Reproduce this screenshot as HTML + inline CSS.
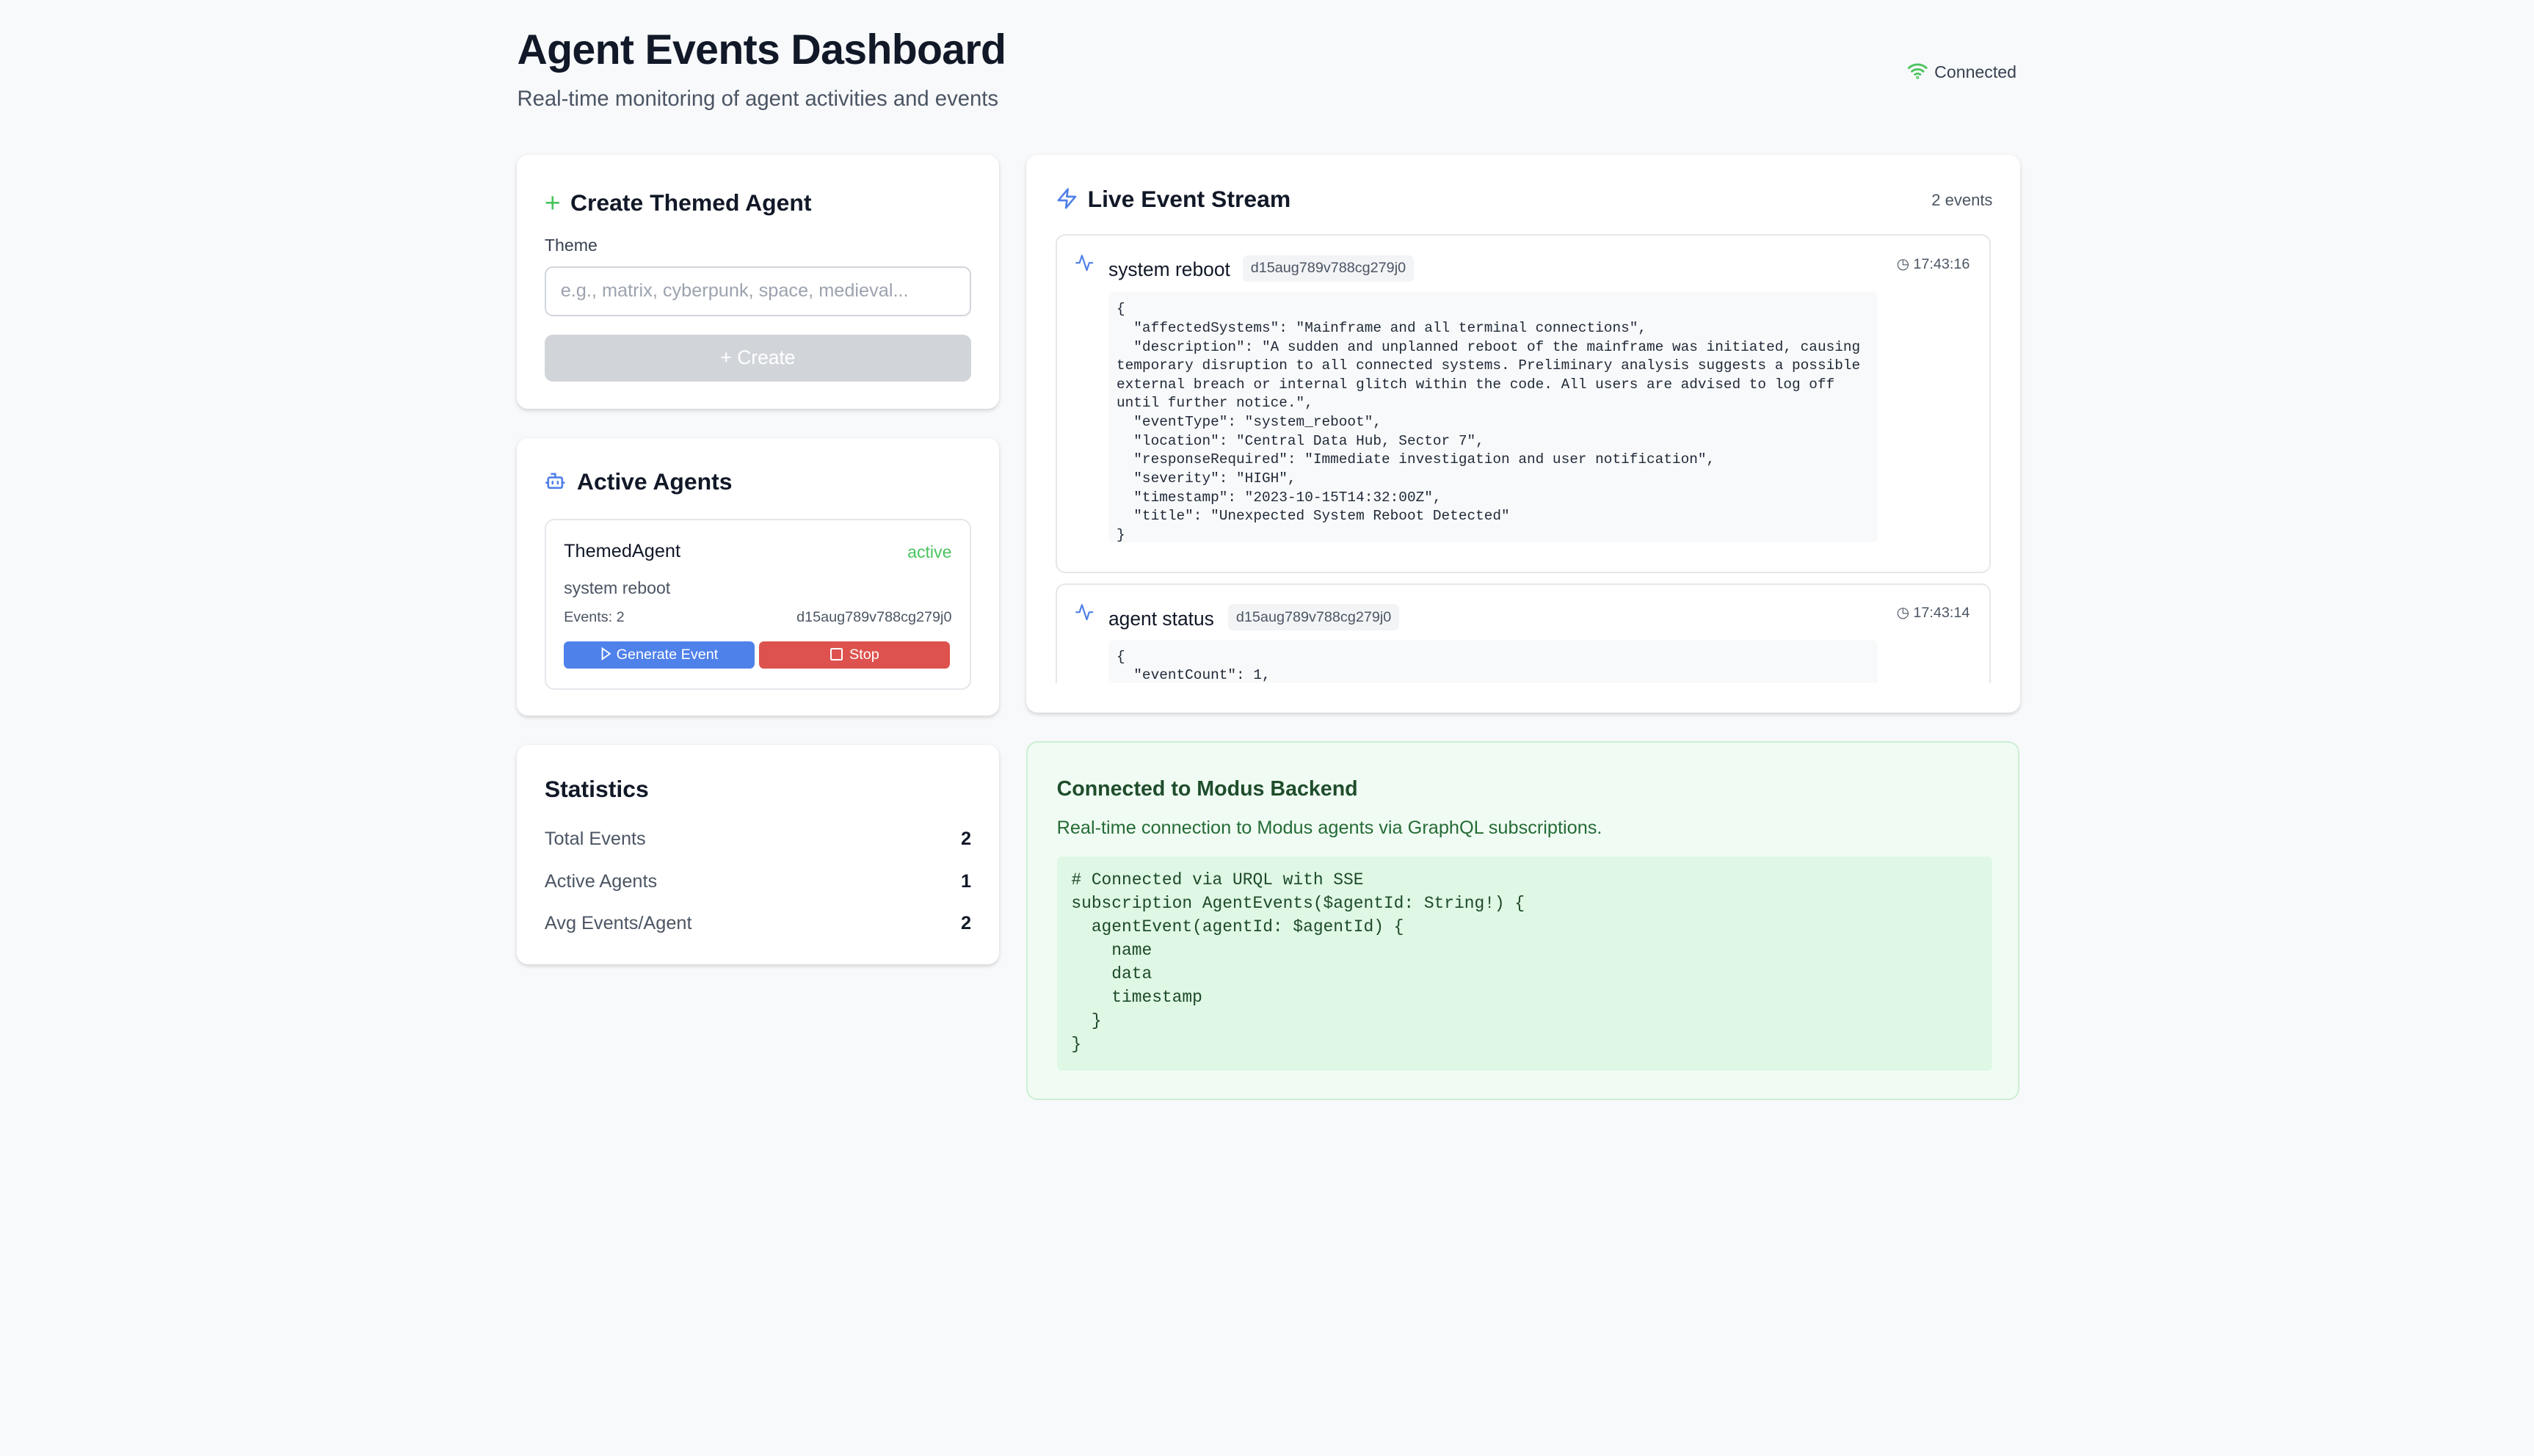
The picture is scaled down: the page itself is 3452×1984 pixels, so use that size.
<!DOCTYPE html>
<html><head><meta charset="utf-8"><style>
html,body{margin:0;padding:0;background:#f8f9fb;}
body{width:3452px;height:1984px;overflow:hidden;}
#r{zoom:2.2015;position:relative;width:1568px;height:901px;font-family:"Liberation Sans",sans-serif;color:#111827;}
.a{position:absolute;}
.card{position:absolute;background:#fff;border-radius:7px;box-shadow:0 1px 3px rgba(0,0,0,.10),0 1px 2px rgba(0,0,0,.06);}
.h{font-size:14.5px;font-weight:bold;color:#111827;white-space:nowrap;}
.mono{font-family:"Liberation Mono","DejaVu Sans Mono",monospace;white-space:pre;}
.tag{background:#f3f4f6;border-radius:3px;color:#4b5563;font-size:9px;padding:3px 5px;}
</style></head><body><div id="r">
<div class="a" style="left:320px;top:16px;font-size:26px;font-weight:bold;letter-spacing:-0.3px;">Agent Events Dashboard</div>
<div class="a" style="left:320px;top:54px;font-size:13.3px;color:#4b5563;">Real-time monitoring of agent activities and events</div>
<div class="a" style="left:1180px;top:38px;font-size:10.5px;color:#374151;">
<svg width="13" height="11" viewBox="0 0 24 20" style="vertical-align:-1px;margin-right:4px" fill="none" stroke="#4ac45e" stroke-width="2.4" stroke-linecap="round"><path d="M2 7a15 15 0 0 1 20 0M5.5 11a10 10 0 0 1 13 0M9 14.5a5 5 0 0 1 6 0"/><circle cx="12" cy="18" r="0.6"/></svg>Connected</div>

<!-- Create -->
<div class="card" style="left:320px;top:96px;width:298px;height:157px;">
 <div class="a h" style="left:17px;top:19px;"><span style="color:#4ac45e;font-weight:normal;font-size:17px;margin-right:6px;position:relative;top:1px">+</span>Create Themed Agent</div>
 <div class="a" style="left:17px;top:50px;font-size:10.5px;color:#374151;">Theme</div>
 <div class="a" style="left:17px;top:69px;width:262px;height:29px;border:1px solid #d1d5db;border-radius:5px;font-size:11.5px;color:#9ca3af;line-height:29px;text-indent:9px;">e.g., matrix, cyberpunk, space, medieval...</div>
 <div class="a" style="left:17px;top:111px;width:264px;height:29px;background:#d1d5da;border-radius:5px;color:#fff;font-size:12px;text-align:center;line-height:29px;">+ Create</div>
</div>

<!-- Active Agents -->
<div class="card" style="left:320px;top:271px;width:298px;height:172px;">
 <div class="a h" style="left:17px;top:19px;"><svg width="13" height="13" viewBox="0 0 24 24" fill="none" stroke="#4f7fe8" stroke-width="2.2" stroke-linecap="round" style="vertical-align:-1px;margin-right:7px"><path d="M12 8V4H8"/><rect x="4" y="8" width="16" height="12" rx="2"/><path d="M2 14h2M20 14h2M9 13v2M15 13v2"/></svg>Active Agents</div>
 <div class="a" style="left:17px;top:50px;width:262px;height:104px;border:1px solid #e5e7eb;border-radius:6px;">
  <div class="a" style="left:11px;top:13px;font-size:11.5px;">ThemedAgent</div>
  <div class="a" style="right:11px;top:14px;font-size:10.5px;color:#4ac45e;">active</div>
  <div class="a" style="left:11px;top:36px;font-size:10.5px;color:#4b5563;">system reboot</div>
  <div class="a" style="left:11px;top:55px;font-size:9px;color:#4b5563;">Events: 2</div>
  <div class="a" style="right:11px;top:55px;font-size:9px;color:#4b5563;">d15aug789v788cg279j0</div>
  <div class="a" style="left:11px;top:75px;width:118px;height:17px;background:#4f81ea;border-radius:3px;color:#fff;font-size:9px;text-align:center;line-height:17px;"><svg width="7" height="8" viewBox="0 0 10 12" style="vertical-align:-1px;margin-right:3px" fill="none" stroke="#fff" stroke-width="1.3"><path d="M1.5 1l7 5-7 5z"/></svg>Generate Event</div>
  <div class="a" style="left:132px;top:75px;width:118px;height:17px;background:#dd524e;border-radius:3px;color:#fff;font-size:9px;text-align:center;line-height:17px;"><span style="display:inline-block;width:6px;height:6px;border:1px solid #fff;border-radius:1px;vertical-align:-1px;margin-right:4px"></span>Stop</div>
 </div>
</div>

<!-- Statistics -->
<div class="card" style="left:320px;top:461px;width:298px;height:136px;">
 <div class="a h" style="left:17px;top:19px;">Statistics</div>
 <div class="a" style="left:17px;top:52px;font-size:11.5px;color:#4b5563;">Total Events</div>
 <div class="a" style="right:17px;top:52px;font-size:11.5px;font-weight:bold;">2</div>
 <div class="a" style="left:17px;top:78px;font-size:11.5px;color:#4b5563;">Active Agents</div>
 <div class="a" style="right:17px;top:78px;font-size:11.5px;font-weight:bold;">1</div>
 <div class="a" style="left:17px;top:104px;font-size:11.5px;color:#4b5563;">Avg Events/Agent</div>
 <div class="a" style="right:17px;top:104px;font-size:11.5px;font-weight:bold;">2</div>
</div>

<!-- Live event stream -->
<div class="card" style="left:635px;top:96px;width:615px;height:345px;">
 <div class="a h" style="left:18px;top:19px;"><svg width="14" height="15" viewBox="0 0 24 24" fill="none" stroke="#4f7fe8" stroke-width="2" stroke-linejoin="round" style="vertical-align:-2px;margin-right:6px"><path d="M13 2L3 14h9l-1 8 10-12h-9l1-8z"/></svg>Live Event Stream</div>
 <div class="a" style="right:17px;top:22px;font-size:10px;color:#4b5563;">2 events</div>
 <div class="a" style="left:18px;top:49px;width:579px;height:278px;overflow:hidden;">
  <div class="a" style="left:0;top:0;width:577px;height:208px;border:1px solid #e5e7eb;border-radius:6px;">
   <svg class="a" style="left:11px;top:11px" width="12" height="12" viewBox="0 0 24 24" fill="none" stroke="#4f7fe8" stroke-width="2" stroke-linejoin="round" stroke-linecap="round"><path d="M22 12h-4l-3 9L9 3l-3 9H2"/></svg>
   <div class="a" style="left:32px;top:14px;font-size:12px;">system reboot</div>
   <div class="a tag" style="left:115px;top:12px;">d15aug789v788cg279j0</div>
   <div class="a" style="right:12px;top:12px;font-size:9px;color:#4b5563;">&#x25F7; 17:43:16</div>
   <div class="a mono" style="left:32px;top:35px;width:471px;height:150px;background:#f8f9fa;border-radius:3px;padding:5px 0 0 5px;font-size:8.82px;line-height:11.65px;color:#1f2937;">{
  "affectedSystems": "Mainframe and all terminal connections",
  "description": "A sudden and unplanned reboot of the mainframe was initiated, causing
temporary disruption to all connected systems. Preliminary analysis suggests a possible
external breach or internal glitch within the code. All users are advised to log off
until further notice.",
  "eventType": "system_reboot",
  "location": "Central Data Hub, Sector 7",
  "responseRequired": "Immediate investigation and user notification",
  "severity": "HIGH",
  "timestamp": "2023-10-15T14:32:00Z",
  "title": "Unexpected System Reboot Detected"
}</div>
  </div>
  <div class="a" style="left:0;top:216px;width:577px;height:100px;border:1px solid #e5e7eb;border-radius:6px;">
   <svg class="a" style="left:11px;top:11px" width="12" height="12" viewBox="0 0 24 24" fill="none" stroke="#4f7fe8" stroke-width="2" stroke-linejoin="round" stroke-linecap="round"><path d="M22 12h-4l-3 9L9 3l-3 9H2"/></svg>
   <div class="a" style="left:32px;top:14px;font-size:12px;">agent status</div>
   <div class="a tag" style="left:106px;top:12px;">d15aug789v788cg279j0</div>
   <div class="a" style="right:12px;top:12px;font-size:9px;color:#4b5563;">&#x25F7; 17:43:14</div>
   <div class="a mono" style="left:32px;top:34px;width:471px;height:60px;background:#f8f9fa;border-radius:3px;padding:5px 0 0 5px;font-size:8.82px;line-height:11.65px;color:#1f2937;">{
  "eventCount": 1,</div>
  </div>
 </div>
</div>

<!-- Connected -->
<div class="a" style="left:635px;top:459px;width:613px;height:220px;background:#f0fcf3;border:1px solid #cdeed5;border-radius:7px;">
 <div class="a" style="left:18px;top:21px;font-size:13px;font-weight:bold;color:#1f4d2b;">Connected to Modus Backend</div>
 <div class="a" style="left:18px;top:46px;font-size:11.5px;color:#256b36;">Real-time connection to Modus agents via GraphQL subscriptions.</div>
 <div class="a mono" style="left:18px;top:70px;width:570px;height:125px;background:#dff7e5;border-radius:3px;padding:8px 0 0 9px;font-size:10.4px;line-height:14.5px;color:#1c4a28;"># Connected via URQL with SSE
subscription AgentEvents($agentId: String!) {
  agentEvent(agentId: $agentId) {
    name
    data
    timestamp
  }
}</div>
</div>
</div></body></html>
